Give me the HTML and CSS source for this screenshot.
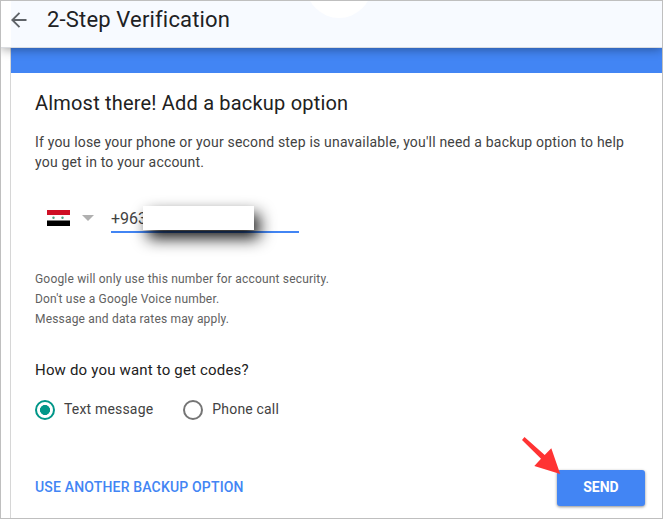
FILE: index.html
```html
<!DOCTYPE html>
<html lang="en">
<head>
    <meta charset="UTF-8">
    <title>2-Step Verification</title>
    <link rel="stylesheet" href="styles.css">
</head>
<body>
    <div class="page">
        <header class="header">
            <div class="header-circle"></div>
            <svg class="back" width="16" height="16" viewBox="0 0 16 16">
                <path d="M15.5 8H1.5M8.500 0.8L1.3 8L8.500 15.2" fill="none" stroke="#5f6368" stroke-width="1.9"/>
            </svg>
            <h1 class="title">2-Step Verification</h1>
        </header>

        <main class="card">
            <div class="banner"></div>
            <div class="content">
                <h2 class="heading">Almost there! Add a backup option</h2>
                <p class="intro">If you lose your phone or your second step is unavailable, you'll need a backup option to help<br>you get in to your account.</p>

                <div class="phone-row">
                    <svg class="flag" width="23" height="16" viewBox="0 0 23 16">
                        <rect width="23" height="16" fill="#fff"/>
                        <rect width="23" height="5" fill="#ce1126"/>
                        <rect y="10.5" width="23" height="5.5" fill="#000"/>
                        <circle cx="6.5" cy="7.7" r="1.2" fill="#4fa286"/>
                        <circle cx="15.5" cy="7.7" r="1.2" fill="#4fa286"/>
                    </svg>
                    <svg class="caret" width="12" height="6" viewBox="0 0 12 6">
                        <path d="M0 0H12L6 6Z" fill="#b0b0b0"/>
                    </svg>
                    <div class="phone-input">
                        <span class="phone-number">+963</span>
                        <div class="mask"></div>
                    </div>
                </div>

                <div class="notes">
                    <p>Google will only use this number for account security.</p>
                    <p>Don't use a Google Voice number.</p>
                    <p>Message and data rates may apply.</p>
                </div>

                <h3 class="question">How do you want to get codes?</h3>
                <div class="options">
                    <div class="option">
                        <span class="radio checked"></span>
                        <span class="label-text">Text message</span>
                    </div>
                    <div class="option">
                        <span class="radio"></span>
                        <span class="label-text">Phone call</span>
                    </div>
                </div>

                <div class="actions">
                    <a class="link">USE ANOTHER BACKUP OPTION</a>
                    <div class="send">
                        SEND
                        <svg class="arrow" width="40" height="40" viewBox="0 0 40 40">
                            <path d="M2.500 0L22.700 18L29.300 11.300L38.200 37L12.300 29L19 21.700L0 3Z" fill="#ff3333"/>
                        </svg>
                    </div>
                </div>
            </div>
        </main>
    </div>
</body>
</html>
```

FILE: styles.css
```css
* {
    box-sizing: border-box;
}

body {
    margin: 0;
    background: #fff;
    font-family: Roboto, Arial, sans-serif;
    color: #212121;
}

h1, h2, h3, p {
    margin: 0;
    font-weight: 400;
    white-space: nowrap;
}

.page {
    width: 663px;
    height: 519px;
    border: 1px solid #bfbfbf;
    overflow: hidden;
    display: flex;
    flex-direction: column;
}

.header {
    position: relative;
    z-index: 1;
    flex: none;
    display: flex;
    align-items: center;
    height: 47px;
    padding: 0 0 8px 10px;
    background: linear-gradient(to right, #fff 10px, #f7faff 10px);
    border-bottom: 1px solid #dadce0;
    box-shadow: 0 1px 10px rgba(0, 0, 0, 0.4);
    clip-path: inset(0 0 -14px 0);
}

.header-circle {
    position: absolute;
    top: -49px;
    left: 305px;
    width: 66px;
    height: 66px;
    border-radius: 50%;
    background: #fff;
}

.title {
    margin-left: 20px;
    font-size: 22px;
    line-height: 28px;
    letter-spacing: 0.17px;
    color: #202124;
}

.card {
    flex: 1;
    margin-left: 9px;
    border-left: 1px solid #d6d6d6;
}

.banner {
    height: 25px;
    background: #4285f4;
}

.content {
    padding: 18px 13px 0 24px;
}

.heading {
    font-size: 20px;
    line-height: 24px;
    letter-spacing: 0.19px;
}

.intro {
    margin-top: 17px;
    font-size: 14px;
    line-height: 20px;
    letter-spacing: 0.19px;
    color: #424242;
}

.phone-row {
    display: flex;
    align-items: center;
    height: 30px;
    margin: 31px 0 0 12px;
}

.caret {
    margin-left: 12px;
}

.phone-input {
    position: relative;
    width: 188px;
    height: 30px;
    margin-left: 17px;
    border-bottom: 2px solid #4285f4;
    font-size: 16px;
    line-height: 31px;
    color: #424242;
}

.mask {
    position: absolute;
    top: 3px;
    left: 32px;
    width: 111px;
    height: 24px;
    background: #fff;
    box-shadow: 5px 8px 16px rgba(0, 0, 0, 0.95);
}

.notes {
    margin-top: 36px;
    font-size: 12px;
    line-height: 20px;
    letter-spacing: 0.185px;
    color: #616161;
}

.question {
    margin-top: 31px;
    font-size: 15px;
    line-height: 20px;
    letter-spacing: 0.18px;
}

.options {
    display: flex;
    gap: 30px;
    margin-top: 20px;
}

.option {
    display: flex;
    align-items: center;
    gap: 9px;
    height: 20px;
    font-size: 14px;
    line-height: 18px;
    letter-spacing: 0.18px;
    color: #424242;
}

.label-text {
    padding-bottom: 2px;
}

.radio {
    width: 20px;
    height: 20px;
    border: 2px solid #757575;
    border-radius: 50%;
}

.radio.checked {
    border-color: #009688;
    background: radial-gradient(circle, #009688 4.7px, transparent 5.3px);
}

.actions {
    display: flex;
    align-items: center;
    justify-content: space-between;
    margin-top: 50px;
    margin-right: 4px;
}

.link {
    padding-bottom: 2px;
    font-size: 14px;
    font-weight: 500;
    letter-spacing: 0.17px;
    color: #4285f4;
}

.send {
    position: relative;
    width: 88px;
    height: 36px;
    border-radius: 3px;
    background: #4285f4;
    box-shadow: 0 1px 3px rgba(0, 0, 0, 0.45);
    color: #fff;
    font-size: 14px;
    font-weight: 700;
    line-height: 35px;
    text-align: center;
}

/* pointer over the button corner */
.arrow {
    position: absolute;
    top: -33px;
    left: -35px;
}
```
